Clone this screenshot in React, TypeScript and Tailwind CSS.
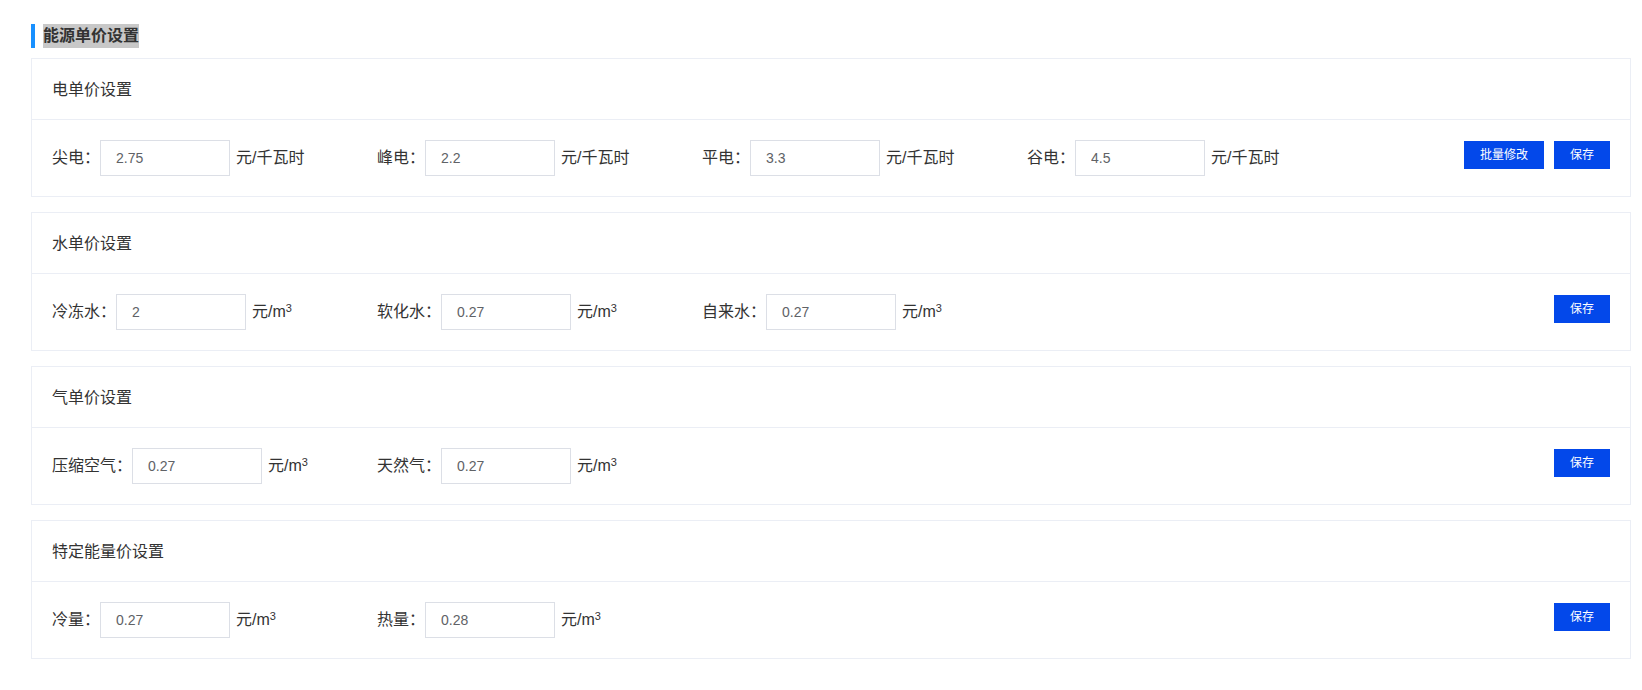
import React from "react";

type Field = { label: string; value: string; unit: "kwh" | "m3" };

type Section = { title: string; fields: Field[]; batch?: boolean };

const sections: Section[] = [
  {
    title: "电单价设置",
    batch: true,
    fields: [
      { label: "尖电", value: "2.75", unit: "kwh" },
      { label: "峰电", value: "2.2", unit: "kwh" },
      { label: "平电", value: "3.3", unit: "kwh" },
      { label: "谷电", value: "4.5", unit: "kwh" },
    ],
  },
  {
    title: "水单价设置",
    fields: [
      { label: "冷冻水", value: "2", unit: "m3" },
      { label: "软化水", value: "0.27", unit: "m3" },
      { label: "自来水", value: "0.27", unit: "m3" },
    ],
  },
  {
    title: "气单价设置",
    fields: [
      { label: "压缩空气", value: "0.27", unit: "m3" },
      { label: "天然气", value: "0.27", unit: "m3" },
    ],
  },
  {
    title: "特定能量价设置",
    fields: [
      { label: "冷量", value: "0.27", unit: "m3" },
      { label: "热量", value: "0.28", unit: "m3" },
    ],
  },
];

function PriceField({ field }: { field: Field }) {
  return (
    <div className="flex w-[325px] shrink-0 items-center">
      <span className="text-[16px] leading-9 text-[#333]">{field.label}：</span>
      <input
        defaultValue={field.value}
        className="h-9 w-[130px] border border-[#dcdfe6] bg-white px-[15px] text-[14px] text-[#606266] outline-none"
      />
      <span className="ml-[6px] text-[16px] leading-9 text-[#333]">
        {field.unit === "kwh" ? (
          "元/千瓦时"
        ) : (
          <>
            元/m<sup className="text-[11px]">3</sup>
          </>
        )}
      </span>
    </div>
  );
}

function PriceCard({ section }: { section: Section }) {
  return (
    <section className="border border-[#ebeef5] bg-white">
      <div className="flex h-[61px] items-center border-b border-[#ebeef5] px-5 pt-[2px] text-[16px] text-[#333]">
        {section.title}
      </div>
      <div className="flex items-start justify-between px-5 py-5">
        <div className="flex">
          {section.fields.map((f) => (
            <PriceField key={f.label} field={f} />
          ))}
        </div>
        <div className="mt-px flex gap-[10px]">
          {section.batch ? (
            <button className="h-7 w-20 bg-[#0348ea] text-[12px] text-white">
              批量修改
            </button>
          ) : null}
          <button className="h-7 w-14 bg-[#0348ea] text-[12px] text-white">
            保存
          </button>
        </div>
      </div>
    </section>
  );
}

export default function App() {
  return (
    <div className="min-h-[690px] bg-white pl-[31px] pt-6 font-['Liberation_Sans','Noto_Sans_CJK_SC',sans-serif]">
      <div className="flex h-6 items-center">
        <span className="h-6 w-1 bg-[#1890ff]" />
        <span className="ml-2 bg-[#c8c8c8] text-[16px] font-bold leading-6 text-[#333]">
          能源单价设置
        </span>
      </div>
      <div className="mt-[10px] flex w-[1600px] flex-col gap-[15px]">
        {sections.map((s) => (
          <PriceCard key={s.title} section={s} />
        ))}
      </div>
    </div>
  );
}
